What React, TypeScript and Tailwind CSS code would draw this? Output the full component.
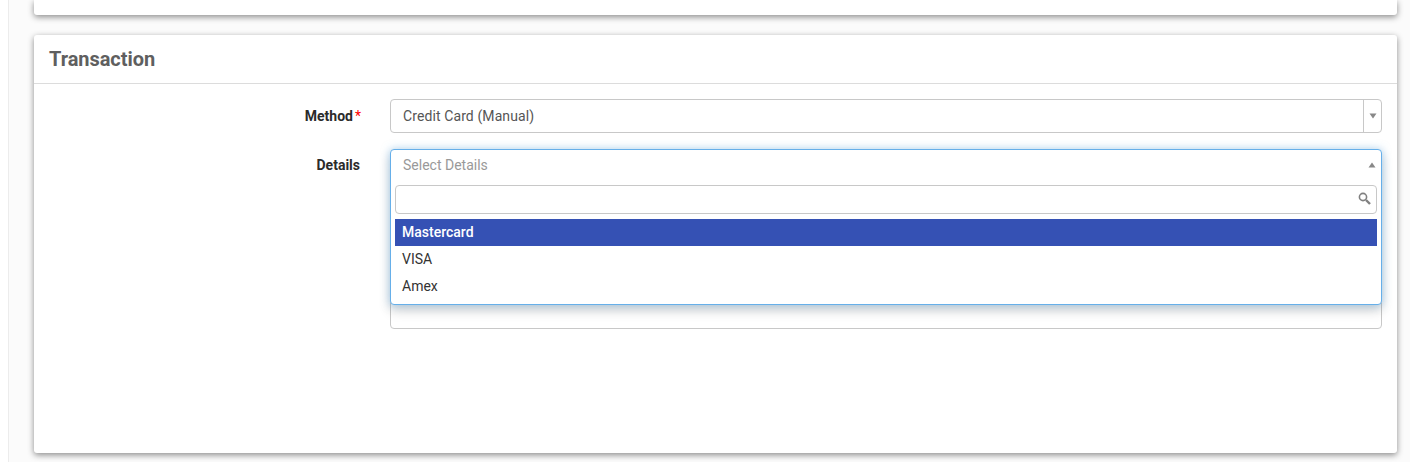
const cardShadow = "shadow-[0_2px_6px_rgba(0,0,0,0.45)]";

function Caret({ up }: { up?: boolean }) {
  return (
    <svg width="8" height="6" viewBox="0 0 8 6" className="text-[#888]">
      <path d={up ? "M4 0.5 L7.5 5.5 L0.5 5.5 Z" : "M0.5 0.5 L7.5 0.5 L4 5.5 Z"} fill="currentColor" />
    </svg>
  );
}

function SearchIcon() {
  return (
    <svg width="13" height="13" viewBox="0 0 13 13" fill="none" className="text-[#808080]">
      <circle cx="5" cy="5" r="3.6" stroke="currentColor" strokeWidth="1.6" />
      <path d="M8 8 L12 12" stroke="currentColor" strokeWidth="2.4" />
    </svg>
  );
}

function Row({ label, required, children }: { label: string; required?: boolean; children: React.ReactNode }) {
  return (
    <div className="flex items-start">
      <div className={`w-[326px] flex items-center justify-end text-[14px] font-bold text-[#2b2b2b] ${required ? "h-[34px]" : "h-[32px]"}`}>
        {label}
        {required && <span className="text-[#f00] font-normal ml-[2px] mr-[-1px]">*</span>}
      </div>
      <div className="ml-[30px] flex-1 relative">{children}</div>
    </div>
  );
}

export default function App() {
  return (
    <div className="flex h-[462px] w-full overflow-hidden bg-white font-['Roboto',sans-serif]">
      <div className="w-[9px] shrink-0 border-r border-[#ececec] bg-white" />
      <main className="flex-1 bg-[#fbfbfb] pl-[25px] pr-[13px]">
        <div className={`h-[15px] rounded-b-[3px] bg-white ${cardShadow}`} />

        <section className={`mt-[20px] h-[418px] rounded-[3px] bg-white ${cardShadow}`}>
          <header className="h-[49px] border-b border-[#dcdcdc] pl-[15px] pt-[11px]">
            <h2 className="text-[20px] leading-[26px] font-bold tracking-[-0.05px] text-[#5f5f5f]">Transaction</h2>
          </header>

          <div className="flex flex-col gap-[16px] pt-[15px] pr-[15px]">
            <Row label="Method" required>
              <div className="flex h-[34px] items-center rounded-[4px] border border-[#c8c8c8] bg-white">
                <span className="flex-1 pl-[12px] text-[14px] tracking-[0.1px] text-[#555]">Credit Card (Manual)</span>
                <span className="flex h-full w-[18px] items-center justify-center border-l border-[#c8c8c8]">
                  <Caret />
                </span>
              </div>
            </Row>

            <Row label="Details">
              <div className="h-[130px]" />
              {/* open select dropdown, sits over the field below */}
              <div className="absolute inset-x-0 top-0 z-10 rounded-[4px] border border-[#66afe9] bg-white shadow-[0_0_8px_rgba(102,175,233,0.5),0_6px_12px_rgba(0,0,0,0.175)]">
                <div className="flex h-[35px] items-center pr-[5px] pb-[5px] pl-[12px]">
                  <span className="flex-1 text-[14px] text-[#999]">Select Details</span>
                  <Caret up />
                </div>
                <div className="px-[4px]">
                  <div className="flex h-[29px] items-center justify-end rounded-[4px] border border-[#c8c8c8] pr-[5px] pb-[2px]">
                    <SearchIcon />
                  </div>
                </div>
                <ul className="mt-[5px] px-[4px] pb-[4px] text-[14px] text-[#333]">
                  <li className="flex h-[27px] items-center bg-[#3551b4] pl-[7px] font-medium text-white">Mastercard</li>
                  <li className="flex h-[27px] items-center pl-[7px]">VISA</li>
                  <li className="flex h-[27px] items-center pl-[7px]">Amex</li>
                </ul>
              </div>
            </Row>

            <div className="ml-[356px] h-[34px] rounded-[4px] border border-[#c8c8c8] bg-white" />
          </div>
        </section>
      </main>
    </div>
  );
}
